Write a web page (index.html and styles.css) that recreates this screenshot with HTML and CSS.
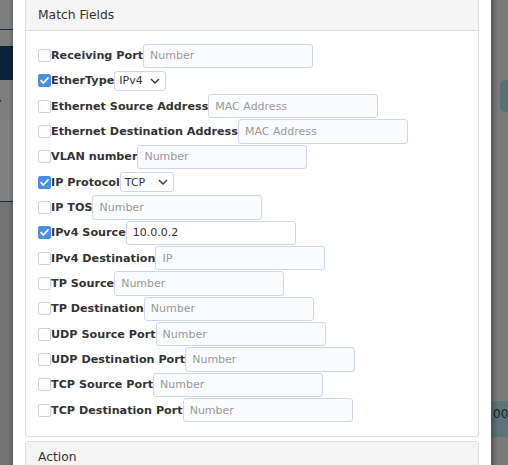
FILE: index.html
```html
<!DOCTYPE html>
<html>
<head>
<meta charset="utf-8">
<link rel="stylesheet" href="styles.css">
</head>
<body>
<div class="screen">
  <div class="bg-left">
    <div class="bl-top"></div>
    <div class="bl-line"></div>
    <div class="bl-gap"></div>
    <div class="bl-navy"></div>
    <div class="bl-chev">›</div>
    <div class="bl-mid"></div>
    <div class="bl-line2"></div>
    <div class="bl-bottom"></div>
  </div>

  <div class="modal">
    <section class="panel panel-match">
      <div class="panel-heading">Match Fields</div>
      <div class="panel-body">
        <div class="row"><span class="cb"></span><label class="lbl">Receiving Port</label><input class="field" placeholder="Number"></div>
        <div class="row"><span class="cb checked"><svg viewBox="0 0 13 13"><path d="M3 6.6 L5.4 9 L10 4" /></svg></span><label class="lbl">EtherType</label><div class="sel sel-eth"><span>IPv4</span><svg viewBox="0 0 10 6"><path d="M1 1 L5 5 L9 1"/></svg></div></div>
        <div class="row"><span class="cb"></span><label class="lbl">Ethernet Source Address</label><input class="field" placeholder="MAC Address"></div>
        <div class="row"><span class="cb"></span><label class="lbl">Ethernet Destination Address</label><input class="field" placeholder="MAC Address"></div>
        <div class="row"><span class="cb"></span><label class="lbl">VLAN number</label><input class="field" placeholder="Number"></div>
        <div class="row"><span class="cb checked"><svg viewBox="0 0 13 13"><path d="M3 6.6 L5.4 9 L10 4" /></svg></span><label class="lbl">IP Protocol</label><div class="sel sel-ip"><span>TCP</span><svg viewBox="0 0 10 6"><path d="M1 1 L5 5 L9 1"/></svg></div></div>
        <div class="row"><span class="cb"></span><label class="lbl">IP TOS</label><input class="field" placeholder="Number"></div>
        <div class="row"><span class="cb checked"><svg viewBox="0 0 13 13"><path d="M3 6.6 L5.4 9 L10 4" /></svg></span><label class="lbl">IPv4 Source</label><input class="field filled" value="10.0.0.2"></div>
        <div class="row"><span class="cb"></span><label class="lbl">IPv4 Destination</label><input class="field" placeholder="IP"></div>
        <div class="row"><span class="cb"></span><label class="lbl">TP Source</label><input class="field" placeholder="Number"></div>
        <div class="row"><span class="cb"></span><label class="lbl">TP Destination</label><input class="field" placeholder="Number"></div>
        <div class="row"><span class="cb"></span><label class="lbl">UDP Source Port</label><input class="field" placeholder="Number"></div>
        <div class="row"><span class="cb"></span><label class="lbl">UDP Destination Port</label><input class="field" placeholder="Number"></div>
        <div class="row"><span class="cb"></span><label class="lbl">TCP Source Port</label><input class="field" placeholder="Number"></div>
        <div class="row"><span class="cb"></span><label class="lbl">TCP Destination Port</label><input class="field" placeholder="Number"></div>
      </div>
    </section>
    <section class="panel panel-action">
      <div class="panel-heading">Action</div>
    </section>
  </div>

  <div class="bg-right">
    <div class="br-top"></div>
    <div class="br-box"></div>
    <div class="br-mid"></div>
    <div class="br-bar">00:0</div>
  </div>
</div>
</body>
</html>
```
FILE: styles.css
```css
html, body {
  margin: 0;
  padding: 0;
  height: 465px;
  overflow: hidden;
  background: #7a7a7a;
}

.screen {
  display: flex;
  height: 465px;
  font-family: "DejaVu Sans", sans-serif;
  color: #333;
}

/* left backdrop */
.bg-left {
  width: 13px;
  flex: none;
  display: flex;
  flex-direction: column;
  background: #7b7b7b;
  position: relative;
  overflow: hidden;
}
.bg-left::after {
  content: "";
  position: absolute;
  top: 0; right: 0; bottom: 0;
  width: 4px;
  background: linear-gradient(to right, rgba(0,0,0,0), rgba(0,0,0,0.18));
}
.bl-top { height: 29px; background: #7e7e7e; }
.bl-line { height: 1px; background: #1f2d3b; }
.bl-gap { height: 16px; background: #7e7e7e; }
.bl-navy { height: 34px; background: #0d2339; }
.bl-chev {
  height: 40px;
  line-height: 40px;
  font-size: 14px;
  font-weight: bold;
  color: #222;
  margin-left: -4px;
  background: #7e7e7e;
}
.bl-mid { height: 81px; background: #808080; }
.bl-line2 { height: 1px; background: #1f2d3b; }
.bl-bottom { flex: 1; background: #737373; }

/* modal */
.modal {
  width: 478px;
  flex: none;
  background: #fff;
  display: flex;
  flex-direction: column;
  padding: 0 12px;
  box-sizing: border-box;
}

.panel {
  border: 1px solid #dddddd;
  border-radius: 0 0 3px 3px;
  background: #fff;
}
.panel-match {
  border-top: none;
}
.panel-action {
  margin-top: 4px;
  border-radius: 3px 3px 0 0;
  flex: 1;
}

.panel-heading {
  background: #f5f5f5;
  border-bottom: 1px solid #dddddd;
  padding: 7px 12px;
  font-size: 12.3px;
  line-height: 16px;
  color: #333;
}
.panel-action .panel-heading {
  padding-top: 7px;
  border-bottom: none;
  height: 100%;
}

.panel-body {
  padding: 12px 12px 13px;
}

.row {
  display: flex;
  align-items: center;
  height: 25.33px;
}

.cb {
  width: 13px;
  height: 13px;
  box-sizing: border-box;
  border: 1px solid #ccd2e6;
  border-radius: 2px;
  background: #fff;
  flex: none;
  display: flex;
}
.cb.checked {
  background: #4a8fe3;
  border-color: #4a8fe3;
}
.cb svg {
  width: 13px;
  height: 13px;
  margin: -1px;
}
.cb svg path {
  fill: none;
  stroke: #fff;
  stroke-width: 1.8;
  stroke-linecap: round;
  stroke-linejoin: round;
}

.lbl {
  font-weight: bold;
  font-size: 11.2px;
  color: #333;
  white-space: nowrap;
}

.field {
  width: 170px;
  height: 24.33px;
  box-sizing: border-box;
  border: 1px solid #cfd5ea;
  border-radius: 3px;
  background: #fafbfc;
  padding: 0 6px;
  margin: 0;
  font-family: "DejaVu Sans", sans-serif;
  font-size: 11px;
  color: #333;
  outline: none;
}
.field::placeholder {
  color: #999;
}
.field.filled {
  background: #fff;
}

.sel {
  height: 20px;
  box-sizing: border-box;
  border: 1px solid #cfd5ea;
  border-radius: 3px;
  background: #fff;
  display: flex;
  align-items: center;
  justify-content: space-between;
  padding: 0 5px 0 4px;
  font-size: 11px;
  color: #333;
}
.sel-eth { width: 52px; }
.sel-ip { width: 54px; }
.sel svg {
  width: 10px;
  height: 6px;
}
.sel svg path {
  fill: none;
  stroke: #333;
  stroke-width: 1.4;
}

/* right backdrop */
.bg-right {
  flex: 1;
  display: flex;
  flex-direction: column;
  background: #7a7a7a;
  position: relative;
  overflow: hidden;
}
.bg-right::before {
  content: "";
  position: absolute;
  top: 0; left: 0; bottom: 0;
  width: 7px;
  background: linear-gradient(to right, rgba(0,0,0,0.28), rgba(0,0,0,0));
}
.br-top { height: 80px; }
.br-box {
  height: 32px;
  margin-left: 9px;
  background: #577175;
  border-radius: 5px 0 0 5px;
}
.br-mid { height: 289px; }
.br-bar {
  height: 36px;
  background: #5b7478;
  color: #1c1c1c;
  font-size: 12px;
  line-height: 26px;
  padding-left: 2px;
  white-space: nowrap;
}
```
